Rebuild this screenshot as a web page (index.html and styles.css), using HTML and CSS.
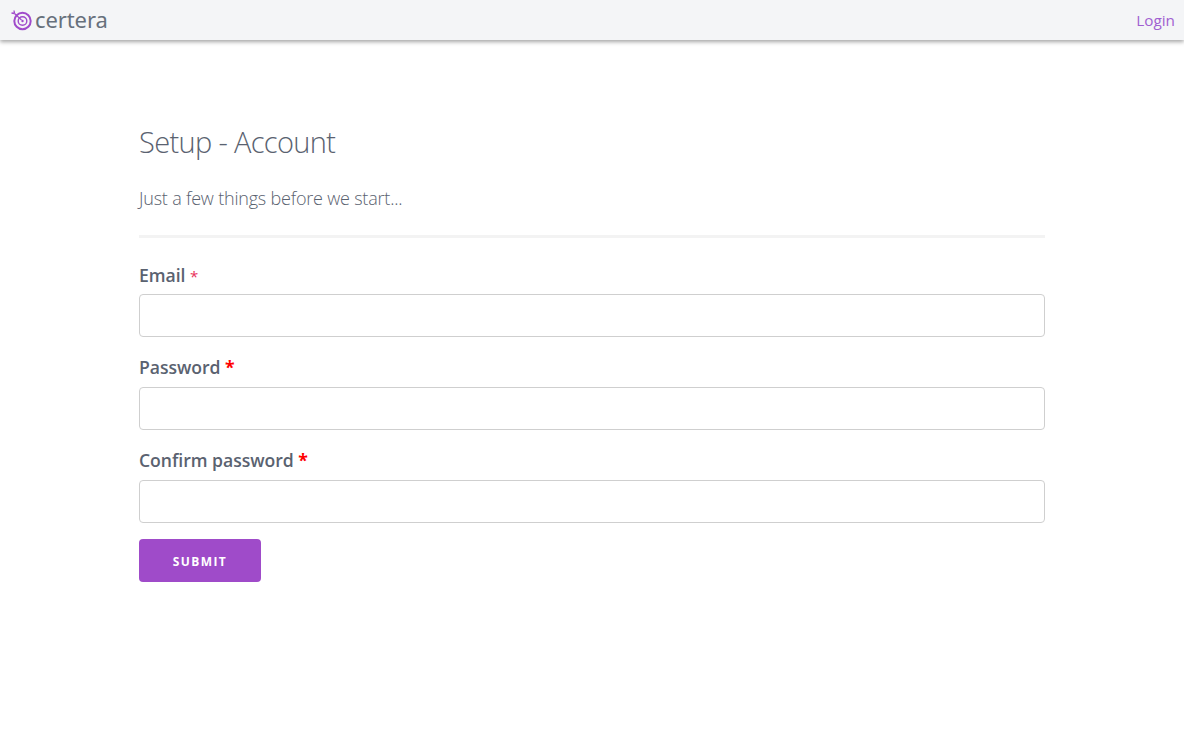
FILE: index.html
```
<!DOCTYPE html>
<html lang="en">
<head>
<meta charset="utf-8">
<title>Setup - Account</title>
<link rel="stylesheet" href="styles.css">
</head>
<body>
<nav class="navbar">
  <a class="brand" href="#">
    <svg class="logo" width="22" height="22" viewBox="0 0 22 22" fill="none" stroke="#a04bcb">
      <circle cx="11.5" cy="12" r="8.2" stroke-width="2"/>
      <circle cx="11.5" cy="12" r="4.3" stroke-width="1.4"/>
      <circle cx="11.5" cy="12" r="1.2" fill="#a04bcb" stroke="none"/>
      <path d="M10.5 11 3.5 4.5" stroke-width="1.2"/>
      <path d="M3.5 4.5 3 1.5M3.5 4.5 .5 4" stroke-width="1.3"/>
    </svg>
    <span class="brand-name">certera</span>
  </a>
  <a class="login" href="#">Login</a>
</nav>
<main class="content">
  <h1 class="title">Setup - Account</h1>
  <p class="lead">Just a few things before we start...</p>
  <hr class="rule">
  <form class="form">
    <div class="field">
      <label class="label">Email <span class="req req-thin">*</span></label>
      <input class="input" type="email">
    </div>
    <div class="field">
      <label class="label">Password <span class="req">*</span></label>
      <input class="input" type="password">
    </div>
    <div class="field">
      <label class="label">Confirm password <span class="req">*</span></label>
      <input class="input" type="password">
    </div>
    <button class="submit" type="button">SUBMIT</button>
  </form>
</main>
</body>
</html>
```
FILE: styles.css
```
* { box-sizing: border-box; }
html, body { margin: 0; padding: 0; }
body {
  background: #fff;
  color: #5a6270;
  font-family: "Open Sans", "Noto Sans", sans-serif;
  height: 730px;
  overflow: hidden;
}
.navbar {
  height: 40px;
  background: #f4f5f7;
  box-shadow: 0 2px 4px rgba(0, 0, 0, 0.35);
  display: flex;
  align-items: center;
  justify-content: space-between;
  padding: 0 9px 0 11px;
}
.brand {
  display: flex;
  align-items: center;
  gap: 2px;
  text-decoration: none;
}
.logo { display: block; margin-top: -1px; }
.brand-name {
  font-family: "Noto Sans", "Open Sans", sans-serif;
  font-size: 22px;
  line-height: 28px;
  color: #67707c;
  letter-spacing: -0.1px;
  margin-top: -2px;
}
.login {
  color: #a15fd1;
  font-size: 15.3px;
  text-decoration: none;
}
.content {
  width: 906px;
  margin: 0 0 0 139px;
  padding-top: 82px;
}
.title {
  margin: 0;
  font-size: 29px;
  line-height: 40px;
  font-weight: 300;
  letter-spacing: -0.66px;
  color: #5a6270;
}
.lead {
  margin: 24px 0 0;
  font-size: 18px;
  line-height: 24px;
  font-weight: 300;
  letter-spacing: -0.2px;
  color: #5a6270;
}
.rule {
  border: 0;
  height: 3px;
  background: #f3f3f3;
  margin: 25px 0 0;
}
.form { margin-top: 23px; }
.field { margin-bottom: 16px; }
.label {
  display: block;
  font-size: 17.6px;
  line-height: 28px;
  font-weight: 600;
  color: #5a6270;
  margin-bottom: 6px;
  letter-spacing: -0.03px;
}
.field:first-child .label { margin-bottom: 5px; }
.req { color: #f00; font-weight: 700; line-height: 1; }
.req-thin { font-weight: 400; color: #e8305a; font-size: 15px; }
.input {
  display: block;
  width: 100%;
  height: 43px;
  border: 1px solid #cfcfcf;
  border-radius: 4px;
  background: #fff;
}
.submit {
  display: block;
  width: 122px;
  height: 43px;
  border: 0;
  border-radius: 4px;
  background: #9f4bc9;
  color: #fff;
  font-family: inherit;
  font-size: 12px;
  font-weight: 700;
  letter-spacing: 1.4px;
  padding: 1px 0 0;
}
```
